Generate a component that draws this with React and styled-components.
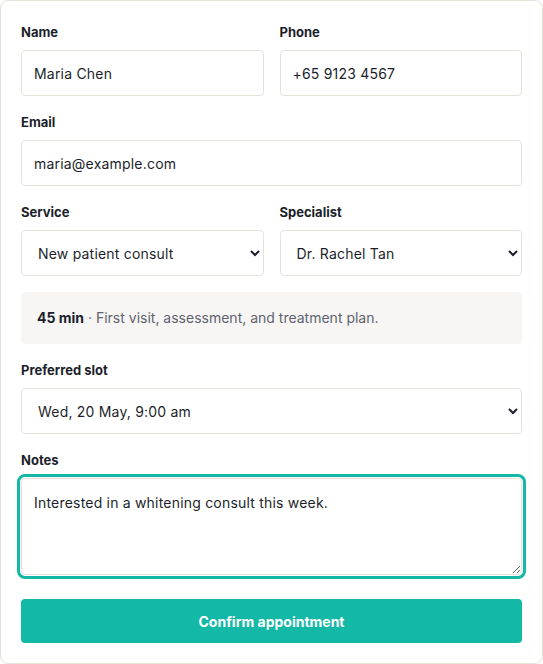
import React from 'react'
import styled, { createGlobalStyle } from 'styled-components'

const Global = createGlobalStyle`
  * { box-sizing: border-box; }
  body {
    margin: 0;
    background: #ffffff;
    font-family: Inter, "Noto Sans", sans-serif;
    color: #1c1f2b;
  }
`

const Card = styled.form`
  width: 543px;
  border: 1px solid #e6e2db;
  border-radius: 8px;
  padding: 21px 20px 20px;
  display: flex;
  flex-direction: column;
  gap: 16px;
  background: #fff;
`

const Row = styled.div`
  display: grid;
  grid-template-columns: minmax(0, 1fr) minmax(0, 1fr);
  gap: 16px;
`

const Field = styled.label`
  display: flex;
  flex-direction: column;
  gap: 8px;
  min-width: 0;
`

const Label = styled.span`
  font-size: 13px;
  font-weight: 700;
  line-height: 20px;
  color: #1c1f2b;
`

const Input = styled.input`
  width: 100%;
  height: 46px;
  border: 1px solid #e6e2db;
  border-radius: 4px;
  padding: 0 12px;
  font: inherit;
  font-size: 14px;
  letter-spacing: 0.2px;
  color: #1c1f2b;
  background: #fff;
  outline: none;
`

const Select = styled.select`
  width: 100%;
  height: 46px;
  border: 1px solid #e6e2db;
  border-radius: 4px;
  padding: 0 8px 0 12px;
  font: inherit;
  font-size: 14px;
  letter-spacing: 0.2px;
  color: #1c1f2b;
  background: #fff;
  outline: none;
`

const Notes = styled.textarea`
  width: 100%;
  height: 97px;
  border: 1px solid #e6e2db;
  border-radius: 4px;
  padding: 14px 12px;
  font: inherit;
  font-size: 14px;
  letter-spacing: 0.2px;
  line-height: 20px;
  color: #1c1f2b;
  resize: vertical;
  outline: ${p => (p.$focused ? '3px solid #14b8a6' : 'none')};
  outline-offset: 1px;
`

const Info = styled.div`
  background: #f7f6f4;
  border-radius: 4px;
  padding: 16px;
  font-size: 14px;
  line-height: 20px;
  color: #5f6370;
  b { color: #1c1f2b; font-weight: 700; }
`

const Button = styled.button`
  margin-top: 8px;
  height: 44px;
  border: none;
  border-radius: 4px;
  background: #14b8a6;
  color: #fff;
  font: inherit;
  font-size: 14px;
  font-weight: 700;
  cursor: pointer;
`

const App = () => {
  return (
    <>
      <Global />
      <Card onSubmit={e => e.preventDefault()}>
        <Row>
          <Field>
            <Label>Name</Label>
            <Input defaultValue="Maria Chen" />
          </Field>
          <Field>
            <Label>Phone</Label>
            <Input defaultValue="+65 9123 4567" />
          </Field>
        </Row>
        <Field>
          <Label>Email</Label>
          <Input defaultValue="maria@example.com" />
        </Field>
        <Row>
          <Field>
            <Label>Service</Label>
            <Select defaultValue="new">
              <option value="new">New patient consult</option>
              <option value="clean">Cleaning</option>
            </Select>
          </Field>
          <Field>
            <Label>Specialist</Label>
            <Select defaultValue="tan">
              <option value="tan">Dr. Rachel Tan</option>
            </Select>
          </Field>
        </Row>
        <Info>
          <b>45 min</b> · First visit, assessment, and treatment plan.
        </Info>
        <Field>
          <Label>Preferred slot</Label>
          <Select defaultValue="a">
            <option value="a">Wed, 20 May, 9:00 am</option>
          </Select>
        </Field>
        <Field>
          <Label>Notes</Label>
          <Notes $focused defaultValue="Interested in a whitening consult this week." />
        </Field>
        <Button type="submit">Confirm appointment</Button>
      </Card>
    </>
  )
}

export default App
